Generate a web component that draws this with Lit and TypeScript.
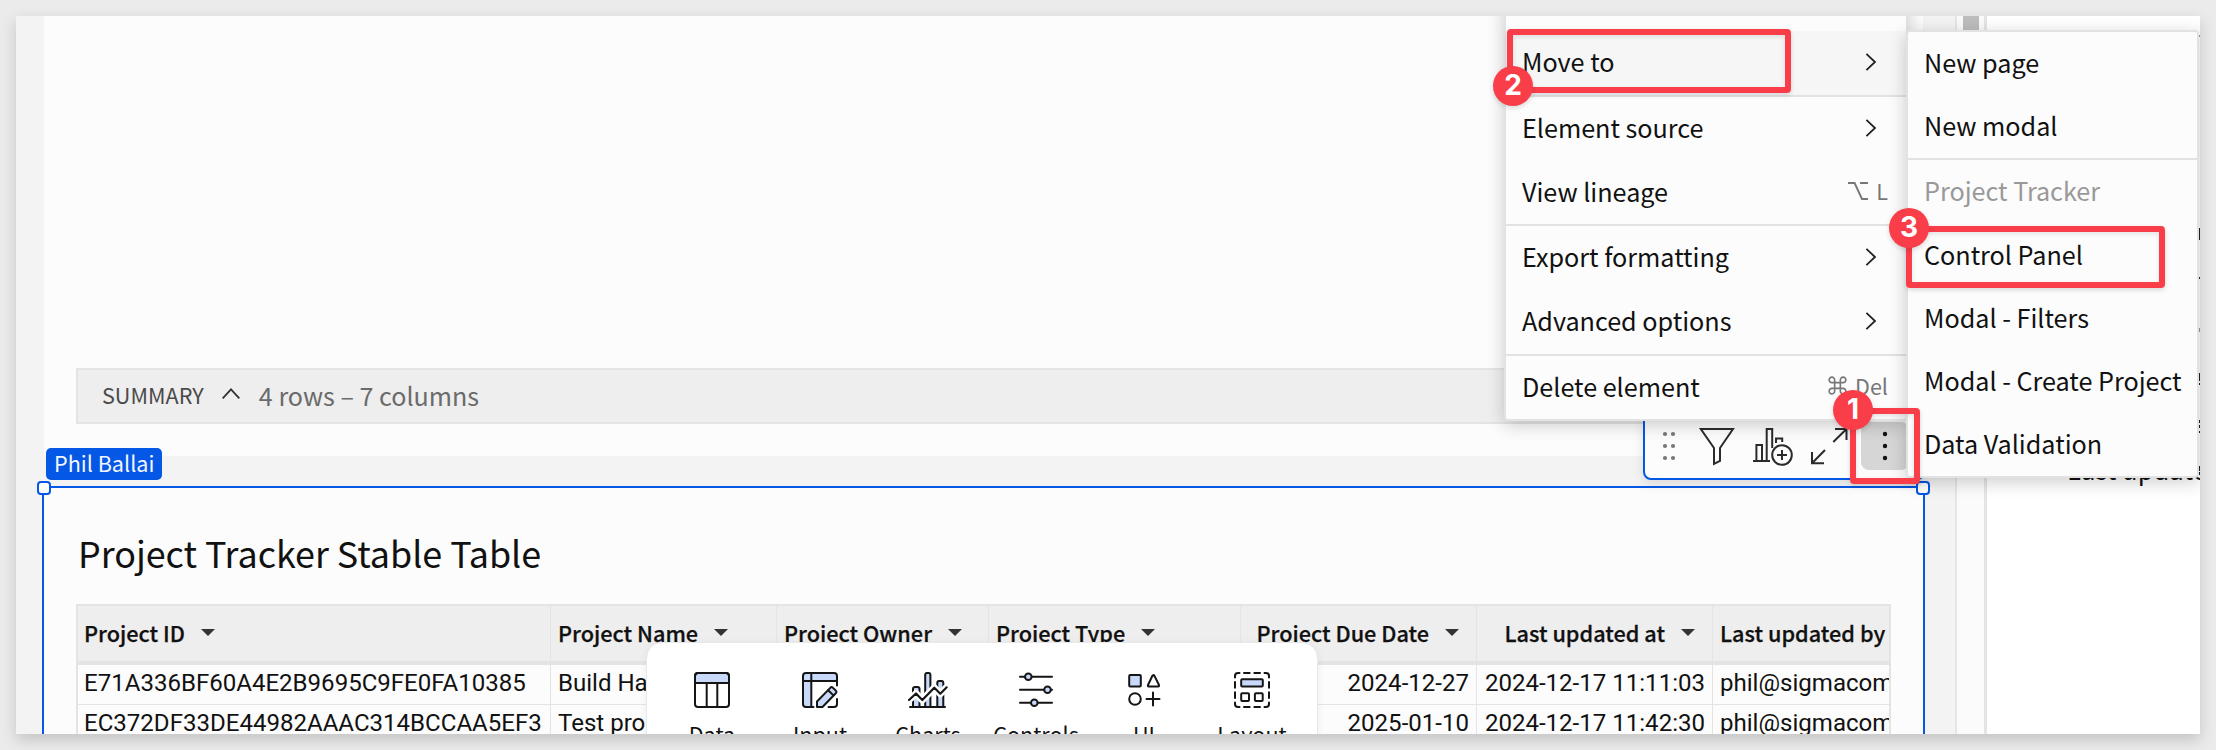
import { LitElement, html, svg, css, nothing } from "lit";
import { customElement } from "lit/decorators.js";
import { classMap } from "lit/directives/class-map.js";

type MenuRow = { label: string; arrow?: boolean; keys?: "option" | "command"; hint?: string; on?: boolean; head?: boolean; tall?: boolean; short?: boolean };

const mainMenu: MenuRow[][] = [
  [{ label: "Move to", arrow: true, on: true }],
  [{ label: "Element source", arrow: true }, { label: "View lineage", keys: "option", hint: "L", short: true }],
  [{ label: "Export formatting", arrow: true }, { label: "Advanced options", arrow: true }],
  [{ label: "Delete element", keys: "command", hint: "Del", short: true }],
];

const subMenu: MenuRow[][] = [
  [{ label: "New page", short: true }, { label: "New modal", short: true }],
  [
    { label: "Project Tracker", head: true },
    { label: "Control Panel", short: true },
    { label: "Modal - Filters", short: true },
    { label: "Modal - Create Project", short: true },
    { label: "Data Validation", short: true },
  ],
];

const columns = [
  { name: "Project ID" },
  { name: "Project Name" },
  { name: "Project Owner" },
  { name: "Project Type" },
  { name: "Project Due Date", right: true },
  { name: "Last updated at", right: true },
  { name: "Last updated by", plain: true },
];

const rows = [
  ["E71A336BF60A4E2B9695C9FE0FA10385", "Build Hadoop", "", "", "2024-12-27", "2024-12-17 11:11:03", "phil@sigmacomputing"],
  ["EC372DF33DE44982AAAC314BCCAA5EF3", "Test project", "", "", "2025-01-10", "2024-12-17 11:42:30", "phil@sigmacomputing"],
];

const commandKey = svg`<svg width="19" height="19" viewBox="0 0 20 20" fill="none" stroke="currentColor" stroke-width="1.7">
  <path d="M7 7V4.2A2.9 2.9 0 1 0 4.1 7H15.9A2.9 2.9 0 1 0 13 4.2V15.8A2.9 2.9 0 1 0 15.9 13H4.1A2.9 2.9 0 1 0 7 15.8Z"/></svg>`;
const optionKey = svg`<svg width="20" height="18" viewBox="0 0 20 18" fill="none" stroke="currentColor" stroke-width="1.9">
  <path d="M0 1H6.6L14 17H20M12 1H20"/></svg>`;

const palette = [
  { name: "Data", icon: svg`
    <path class="tint" d="M1 11V4A3 3 0 0 1 4 1H32A3 3 0 0 1 35 4V11Z"/>
    <rect x="1" y="1" width="34" height="34" rx="3"/><path d="M1 11H35M12.7 11V35M23.3 11V35"/>` },
  { name: "Input", icon: svg`
    <path class="tint" stroke="none" d="M1 4A3 3 0 0 1 4 1H32A3 3 0 0 1 35 4V9H9.3V35H4A3 3 0 0 1 1 32Z"/>
    <path d="M11.5 35H4A3 3 0 0 1 1 32V4A3 3 0 0 1 4 1H32A3 3 0 0 1 35 4V13.5M1 9H35M9.3 1V35M35 27V32A3 3 0 0 1 32 35H26.5"/>
    <path class="tint" d="M15 35V29.5L28.5 15.6Q29.6 14.6 30.7 15.6L34 18.8Q35 19.9 34 21L20.5 35Z"/><path d="M26.2 18.2L31.4 23.4"/>` },
  { name: "Charts", icon: svg`
    <path class="tint" d="M3 34V17Q3 15 5 15H7.5Q9.5 15 9.5 17V34M15.2 34V3Q15.2 1 17 1H18.6Q20.4 1 20.4 3V34M27.3 34V11Q27.3 9 29 9H31.5Q33.3 9 33.3 11V34"/>
    <path d="M0 35H35"/>
    <path class="halo" d="M-1 28L6 21.5L12.3 28L24.3 15.7L30.3 21.7L36.7 15.3"/>
    <path class="line" d="M-1 28L6 21.5L12.3 28L24.3 15.7L30.3 21.7L36.7 15.3"/>` },
  { name: "Controls", icon: svg`
    <path d="M2 4.7H34M2 17.7H34M2 30.7H34"/>
    <circle class="tint" cx="10.3" cy="4.7" r="3.3"/><circle class="tint" cx="29.5" cy="17.7" r="3.3"/><circle class="tint" cx="16.3" cy="30.7" r="3.3"/>` },
  { name: "UI", icon: svg`
    <rect class="tint" x="3.2" y="3" width="11.6" height="11.6" rx="1"/>
    <path d="M27 3.4Q27.6 2.4 28.2 3.4L33 13Q33.4 14.4 32.2 14.4H22.8Q21.4 14.4 22 13L26.4 3.8Z"/>
    <circle cx="9" cy="27" r="5.8"/><path d="M27 20.5V33.5M20.5 27H33.5"/>` },
  { name: "Layout", icon: svg`
    <path d="M1 5.5V4A3 3 0 0 1 4 1H5.5M10 1H15.7M20.3 1H26M30.5 1H32A3 3 0 0 1 35 4V5.5M35 10V15.7M35 20.3V26M35 30.5V32A3 3 0 0 1 32 35H30.5M26 35H20.3M15.7 35H10M5.5 35H4A3 3 0 0 1 1 32V30.5M1 26V20.3M1 15.7V10"/>
    <rect class="tint" x="7.2" y="7.2" width="21.6" height="7.2" rx="1"/>
    <rect x="7.2" y="21.2" width="7.8" height="7.8" rx="1"/><rect x="20.9" y="21.2" width="7.8" height="7.8" rx="1"/>` },
];

@customElement("app-root")
export class AppRoot extends LitElement {
  static styles = css`
    * { box-sizing: border-box; }
    :host {
      display: block; height: 750px; padding: 16px; overflow: hidden; background: #ebebeb; color: #111;
      font-family: "Noto Sans CJK SC", "Noto Sans", sans-serif; font-size: 21.6px; white-space: nowrap;
    }
    svg { display: block; flex: none; overflow: visible; }
    .frame { position: relative; width: 2184px; height: 718px; box-shadow: 0 6px 14px rgba(0,0,0,.17); }
    .window { position: relative; display: flex; width: 2184px; height: 718px; overflow: hidden; background: #f3f3f3; }

    .canvas { width: 1939px; padding-left: 28px; flex: none; }
    .card { width: 1879px; height: 440px; background: #fcfcfc; padding: 352px 32px 0; }
    .summary {
      display: flex; align-items: center; height: 56px; padding: 0 0 3px 24px; border: 2px solid #e4e4e4;
      background: #eee; color: #4a4a4a;
    }
    .caret { margin: -2px 19px 0 18px; }
    .count { font-size: 25.1px; color: #6b6b6b; }
    .picked {
      position: relative; width: 1883px; height: 300px; margin: 30px 0 0 -2px; padding: 38px 32px 0;
      border: 2px solid #0557e5; background: #fcfcfc;
    }
    .title { margin: 0 0 26px 2px; font-size: 35.9px; font-weight: 400; line-height: 52px; letter-spacing: -.03px; }
    .grip { position: absolute; top: -7px; width: 14px; height: 14px; border: 2px solid #0557e5; border-radius: 4px; background: #fff; }
    .grip.l { left: -7px; }
    .grip.r { right: -7px; }
    .owner {
      position: absolute; left: 30px; top: 432px; width: 116px; height: 32px; padding: 0 0 3px 8px; border-radius: 5px;
      background: #0557e5; color: #f2f6fe; line-height: 29px;
    }

    .table { width: 1815px; border: 2px solid #e4e4e4; border-bottom: 0; }
    .row { display: grid; grid-template-columns: 473px 226px 212px 252px 236px 236px 176px; }
    .head { height: 59px; border-bottom: 4px solid #e4e4e4; background: #eee; font-size: 21.7px; font-weight: 500; -webkit-text-stroke: .25px #111; }
    .cell { display: flex; align-items: center; gap: 16px; padding: 0 6px 2px 7px; border-right: 1px solid #e4e4e4; overflow: hidden; }
    .cell:first-child { padding-left: 6px; }
    .cell:last-child { border-right: 0; padding-right: 0; }
    .head .cell.right { justify-content: flex-end; padding-right: 17px; }
    .body { height: 40px; border-bottom: 1px solid #e4e4e4; font-family: Roboto, sans-serif; font-size: 24.05px; }
    .body .cell { padding-bottom: 4px; }
    .body .cell.right { justify-content: flex-end; padding-right: 7px; }

    .track { width: 32px; flex: none; border: solid #e5e5e5; border-width: 0 3px 0 2px; background: #fbfbfb; padding-left: 6px; }
    .thumb { width: 16px; height: 60px; background: #bdbdbd; margin-top: -30px; }
    .side { width: 213px; flex: none; background: #fff; position: relative; }
    .field { margin: 435px 0 0 80px; font-size: 25.6px; line-height: 36px; }
    .edge { position: absolute; left: 0; top: 0; }

    .tools {
      position: absolute; left: 1627px; top: 396px; width: 282px; height: 68px; display: flex; align-items: center; gap: 18px;
      padding-left: 18px; border: 2px solid #0557e5; border-radius: 8px; background: #fcfcfc; color: #2b2b2b;
      box-shadow: 0 4px 12px rgba(0,0,0,.1);
    }
    .tools svg { fill: none; stroke: currentColor; stroke-width: 2; }
    .tools .dots { fill: #777; stroke: none; }
    .more { display: flex; align-items: center; justify-content: center; width: 48px; height: 48px; margin-left: -4px; border-radius: 8px; background: #d6d6d6; }
    .tools .more .dots { fill: #111; }

    .menu { position: absolute; border: 2px solid #e2e2e2; border-radius: 4px; background: #fcfcfc; font-size: 25.2px; box-shadow: 0 4px 18px rgba(0,0,0,.2); }
    .main { left: 1488px; top: -20px; width: 404px; padding-top: 33px; }
    .sub { left: 1890px; top: 14px; width: 293px; }
    .group + .group { border-top: 2px solid #e2e2e2; }
    .item { display: flex; align-items: center; height: 64px; padding: 0 18px 5px 16px; }
    .item.short { height: 63px; padding-bottom: 4px; }
    .item.on { background: #f6f6f6; }
    .item.head-row { color: #999; }
    .text { flex: 1; letter-spacing: -.02px; }
    .arrow { margin: 2px 11px 0 0; }
    .keys { display: flex; align-items: center; gap: 8px; color: #777; font-size: 21.6px; }

    .palette {
      position: absolute; left: 630px; top: 626px; width: 672px; height: 130px; display: flex; padding: 29px 11px 0;
      border: 1px solid #e8e8e8; border-radius: 16px; background: #fff; box-shadow: 0 2px 8px rgba(0,0,0,.06);
    }
    .tool { width: 108px; display: flex; flex-direction: column; align-items: center; line-height: 32px; gap: 10px; }
    .tool svg { fill: none; stroke: #151515; stroke-width: 2; stroke-linecap: round; stroke-linejoin: round; }
    .tint { fill: #c8d9fa; }
    .halo { stroke: #fff; stroke-width: 7; stroke-linecap: butt; }
    .line { stroke-width: 2.2; }

    .mark { position: absolute; border: 6px solid #f93e4a; border-radius: 4px; box-shadow: 0 2px 5px rgba(0,0,0,.14), inset 0 2px 5px rgba(0,0,0,.1); }
    .m1 { left: 1834px; top: 392px; width: 70px; height: 76px; }
    .m2 { left: 1491px; top: 13px; width: 284px; height: 64px; }
    .m3 { left: 1890px; top: 210px; width: 259px; height: 62px; }
    .num {
      position: absolute; width: 40px; height: 40px; border-radius: 50%; background: #f93e4a; color: #fff; text-align: center;
      font: 700 28px/39px Inter, sans-serif; box-shadow: 0 2px 5px rgba(0,0,0,.14);
    }
    .n1 { left: 1817px; top: 374px; }
    .n2 { left: 1477px; top: 50px; }
    .n3 { left: 1873px; top: 192px; }
  `;

  private menu(groups: MenuRow[][], kind: string) {
    return html`<div class="menu ${kind}">${groups.map((g) => html`<div class="group">${g.map((r) => html`
      <div class=${classMap({ item: true, on: !!r.on, short: !!r.short, "head-row": !!r.head })}>
        <span class="text">${r.label}</span>
        ${r.arrow ? html`<svg class="arrow" width="12" height="18" viewBox="0 0 12 18" fill="none" stroke="#222" stroke-width="1.8"><path d="M1.4 .8L10 9L1.4 17.2"/></svg>` : nothing}
        ${r.keys ? html`<span class="keys">${r.keys === "option" ? optionKey : commandKey}<span>${r.hint}</span></span>` : nothing}
      </div>`)}</div>`)}</div>`;
  }

  render() {
    return html`
      <div class="frame"><div class="window">
        <div class="canvas">
          <section class="card">
            <div class="summary">
              <span>SUMMARY</span>
              <svg class="caret" width="18" height="11" viewBox="0 0 18 11" fill="none" stroke="#333" stroke-width="1.8"><path d="M.7 10.3L9 1.3L17.3 10.3"/></svg>
              <span class="count">4 rows – 7 columns</span>
            </div>
          </section>
          <section class="picked">
            <h1 class="title">Project Tracker Stable Table</h1>
            <div class="table">
              <div class="row head">${columns.map((c) => html`
                <div class=${classMap({ cell: true, right: !!c.right })}><span>${c.name}</span>
                  ${c.plain ? nothing : html`<svg width="14" height="7" viewBox="0 0 14 7" fill="#333"><path d="M0 0H14L7 7Z"/></svg>`}</div>`)}
              </div>
              ${rows.map((r) => html`<div class="row body">${r.map((v, i) => html`
                <div class=${classMap({ cell: true, right: !!columns[i].right })}>${v}</div>`)}</div>`)}
            </div>
            <i class="grip l"></i><i class="grip r"></i>
          </section>
        </div>
        <div class="track"><div class="thumb"></div></div>
        <aside class="side">
          <div class="field">Last updated</div>
          <svg class="edge" width="213" height="718" viewBox="0 0 213 718" fill="#222">
            <path d="M212 212h1v12h-1zM212 261h1v2h-1zM212 357h1v8h-1zM212 367h1v2h-1zM212 404h1v3h-1zM212 409h1v3h-1zM212 415h1v2h-1zM212 452h1v3h-1zM212 457h1v2h-1z"/>
            <path fill="#999" d="M212 19h1v2h-1zM212 312h1v4h-1z"/>
          </svg>
        </aside>

        <span class="owner">Phil Ballai</span>

        <div class="tools">
          <svg class="dots" width="17" height="30" viewBox="0 0 17 30">${[3, 15, 27].map((y) => svg`<circle cx="2" cy=${y} r="2.1"/><circle cx="10" cy=${y} r="2.1"/>`)}</svg>
          <svg width="37" height="38" viewBox="0 0 37 38"><path d="M2.8 2H35L22 21V34L16 37V21Z"/></svg>
          <svg width="40" height="38" viewBox="0 0 40 38"><path d="M0 34H17M3.4 34V18H9V34M13.7 34V2H19.2V21M23 16V11.5H29.2V15M29 23V33M24 28H34"/><circle cx="29" cy="28" r="9.8"/></svg>
          <svg width="36" height="38" viewBox="0 0 36 38"><path d="M22.3 15L35.5 2M24 2H35.5V13M14 23L1 36.2M1 25V36.2H13"/></svg>
          <span class="more"><svg class="dots" width="6" height="30" viewBox="0 0 6 30">${[3, 15, 27].map((y) => svg`<circle cx="3" cy=${y} r="2.2"/>`)}</svg></span>
        </div>

        <div class="palette">${palette.map((p) => html`
          <div class="tool"><svg width="36" height="36" viewBox="0 0 36 36">${p.icon}</svg><span>${p.name}</span></div>`)}
        </div>

        ${this.menu(mainMenu, "main")}
        ${this.menu(subMenu, "sub")}

        <i class="mark m1"></i><b class="num n1">1</b>
        <i class="mark m2"></i><b class="num n2">2</b>
        <i class="mark m3"></i><b class="num n3">3</b>
      </div></div>`;
  }
}
